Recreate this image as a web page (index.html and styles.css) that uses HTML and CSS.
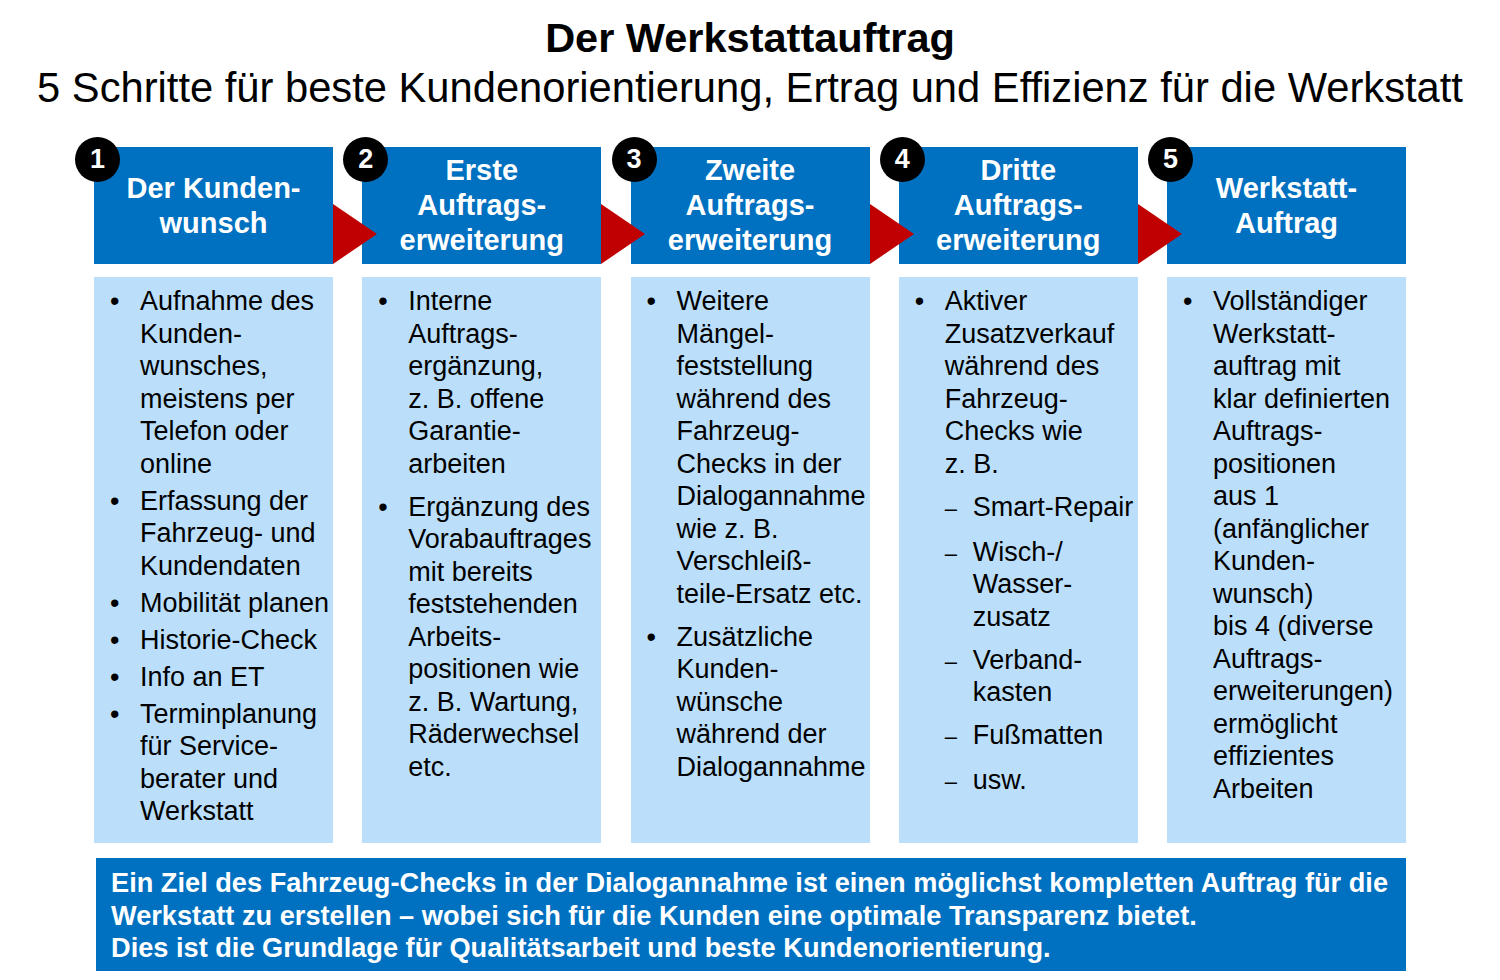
FILE: index.html
```html
<!DOCTYPE html>
<html lang="de">
<head>
<meta charset="utf-8">
<title>Der Werkstattauftrag</title>
<link rel="stylesheet" href="styles.css">
</head>
<body>
<header class="titles">
  <h1 class="title">Der Werkstattauftrag</h1>
  <p class="subtitle">5 Schritte für beste Kundenorientierung, Ertrag und Effizienz für die Werkstatt</p>
</header>

<main class="steps">
  <section class="step">
    <div class="head arrow">
      <span class="badge">1</span>
      <h2 class="head-text">Der Kunden-<br>wunsch</h2>
    </div>
    <div class="body">
      <ul class="list tight">
        <li>Aufnahme des<br>Kunden-<br>wunsches,<br>meistens per<br>Telefon oder<br>online</li>
        <li>Erfassung der<br>Fahrzeug- und<br>Kundendaten</li>
        <li>Mobilität planen</li>
        <li>Historie-Check</li>
        <li>Info an ET</li>
        <li>Terminplanung<br>für Service-<br>berater und<br>Werkstatt</li>
      </ul>
    </div>
  </section>

  <section class="step">
    <div class="head arrow">
      <span class="badge">2</span>
      <h2 class="head-text">Erste<br>Auftrags-<br>erweiterung</h2>
    </div>
    <div class="body">
      <ul class="list">
        <li>Interne<br>Auftrags-<br>ergänzung,<br>z. B. offene<br>Garantie-<br>arbeiten</li>
        <li>Ergänzung des<br>Vorabauftrages<br>mit bereits<br>feststehenden<br>Arbeits-<br>positionen wie<br>z. B. Wartung,<br>Räderwechsel<br>etc.</li>
      </ul>
    </div>
  </section>

  <section class="step">
    <div class="head arrow">
      <span class="badge">3</span>
      <h2 class="head-text">Zweite<br>Auftrags-<br>erweiterung</h2>
    </div>
    <div class="body">
      <ul class="list">
        <li>Weitere<br>Mängel-<br>feststellung<br>während des<br>Fahrzeug-<br>Checks in der<br>Dialogannahme<br>wie z. B.<br>Verschleiß-<br>teile-Ersatz etc.</li>
        <li>Zusätzliche<br>Kunden-<br>wünsche<br>während der<br>Dialogannahme</li>
      </ul>
    </div>
  </section>

  <section class="step">
    <div class="head arrow">
      <span class="badge">4</span>
      <h2 class="head-text">Dritte<br>Auftrags-<br>erweiterung</h2>
    </div>
    <div class="body">
      <ul class="list">
        <li>
          <div>Aktiver<br>Zusatzverkauf<br>während des<br>Fahrzeug-<br>Checks wie<br>z. B.
            <ul class="sublist">
              <li>Smart-Repair</li>
              <li>Wisch-/<br>Wasser-<br>zusatz</li>
              <li>Verband-<br>kasten</li>
              <li>Fußmatten</li>
              <li>usw.</li>
            </ul>
          </div>
        </li>
      </ul>
    </div>
  </section>

  <section class="step">
    <div class="head">
      <span class="badge">5</span>
      <h2 class="head-text">Werkstatt-<br>Auftrag</h2>
    </div>
    <div class="body">
      <ul class="list">
        <li>Vollständiger<br>Werkstatt-<br>auftrag mit<br>klar definierten<br>Auftrags-<br>positionen<br>aus 1<br>(anfänglicher<br>Kunden-<br>wunsch)<br>bis 4 (diverse<br>Auftrags-<br>erweiterungen)<br>ermöglicht<br>effizientes<br>Arbeiten</li>
      </ul>
    </div>
  </section>
</main>

<footer class="summary">
  <p class="summary-text">Ein Ziel des Fahrzeug-Checks in der Dialogannahme ist einen möglichst kompletten Auftrag für die<br>Werkstatt zu erstellen – wobei sich für die Kunden eine optimale Transparenz bietet.<br>Dies ist die Grundlage für Qualitätsarbeit und beste Kundenorientierung.</p>
</footer>
</body>
</html>
```

FILE: styles.css
```css
html, body {
  margin: 0;
  padding: 0;
  background: #ffffff;
}

body {
  font-family: "Liberation Sans", Arial, sans-serif;
  color: #000000;
  width: 1500px;
}

.titles {
  padding-top: 13px;
  text-align: center;
}

.title {
  margin: 0;
  font-size: 41.5px;
  line-height: 50px;
  font-weight: bold;
}

.subtitle {
  margin: 0;
  font-size: 41.7px;
  line-height: 50px;
  font-weight: normal;
  white-space: nowrap;
}

.steps {
  margin: 34px 0 0 94px;
  width: 1312px;
  display: grid;
  grid-template-columns: repeat(5, 239px);
  column-gap: 29.25px;
}

.step {
  display: flex;
  flex-direction: column;
}

.head {
  position: relative;
  height: 117px;
  background: #0070c0;
  display: flex;
  align-items: center;
  justify-content: center;
}

.head-text {
  margin: 0;
  color: #ffffff;
  font-size: 29px;
  line-height: 35px;
  font-weight: bold;
  text-align: center;
  white-space: nowrap;
}

.badge {
  position: absolute;
  left: -19px;
  top: -10px;
  width: 45px;
  height: 45px;
  border-radius: 50%;
  background: #000000;
  color: #ffffff;
  font-weight: bold;
  font-size: 27px;
  line-height: 45px;
  text-align: center;
  z-index: 3;
}

.arrow::after {
  content: "";
  position: absolute;
  right: -44px;
  bottom: 0;
  width: 0;
  height: 0;
  border-top: 30px solid transparent;
  border-bottom: 30px solid transparent;
  border-left: 44px solid #c00000;
  z-index: 2;
}

.body {
  margin-top: 13px;
  height: 566px;
  background: #bbdffa;
  padding: 8px 0 0 16px;
  box-sizing: border-box;
}

.list {
  margin: 0;
  padding: 0;
  list-style: none;
  font-size: 27px;
  line-height: 32.5px;
}

.list > li {
  display: flex;
  align-items: baseline;
  white-space: nowrap;
  margin-bottom: 10.5px;
}

.list.tight > li {
  margin-bottom: 4.5px;
}

.list > li::before {
  content: "•";
  flex: 0 0 30px;
}

.sublist {
  margin: 10.5px 0 0 0;
  padding: 0;
  list-style: none;
}

.sublist > li {
  display: flex;
  align-items: baseline;
  margin-bottom: 10.5px;
}

.sublist > li::before {
  content: "–";
  flex: 0 0 28px;
  font-size: 22px;
}

.summary {
  margin: 15px 0 0 96px;
  width: 1310px;
  height: 113px;
  background: #0070c0;
  box-sizing: border-box;
  padding: 9px 0 0 15px;
}

.summary-text {
  margin: 0;
  color: #ffffff;
  font-weight: bold;
  font-size: 27.2px;
  line-height: 32.5px;
  white-space: nowrap;
}
```
